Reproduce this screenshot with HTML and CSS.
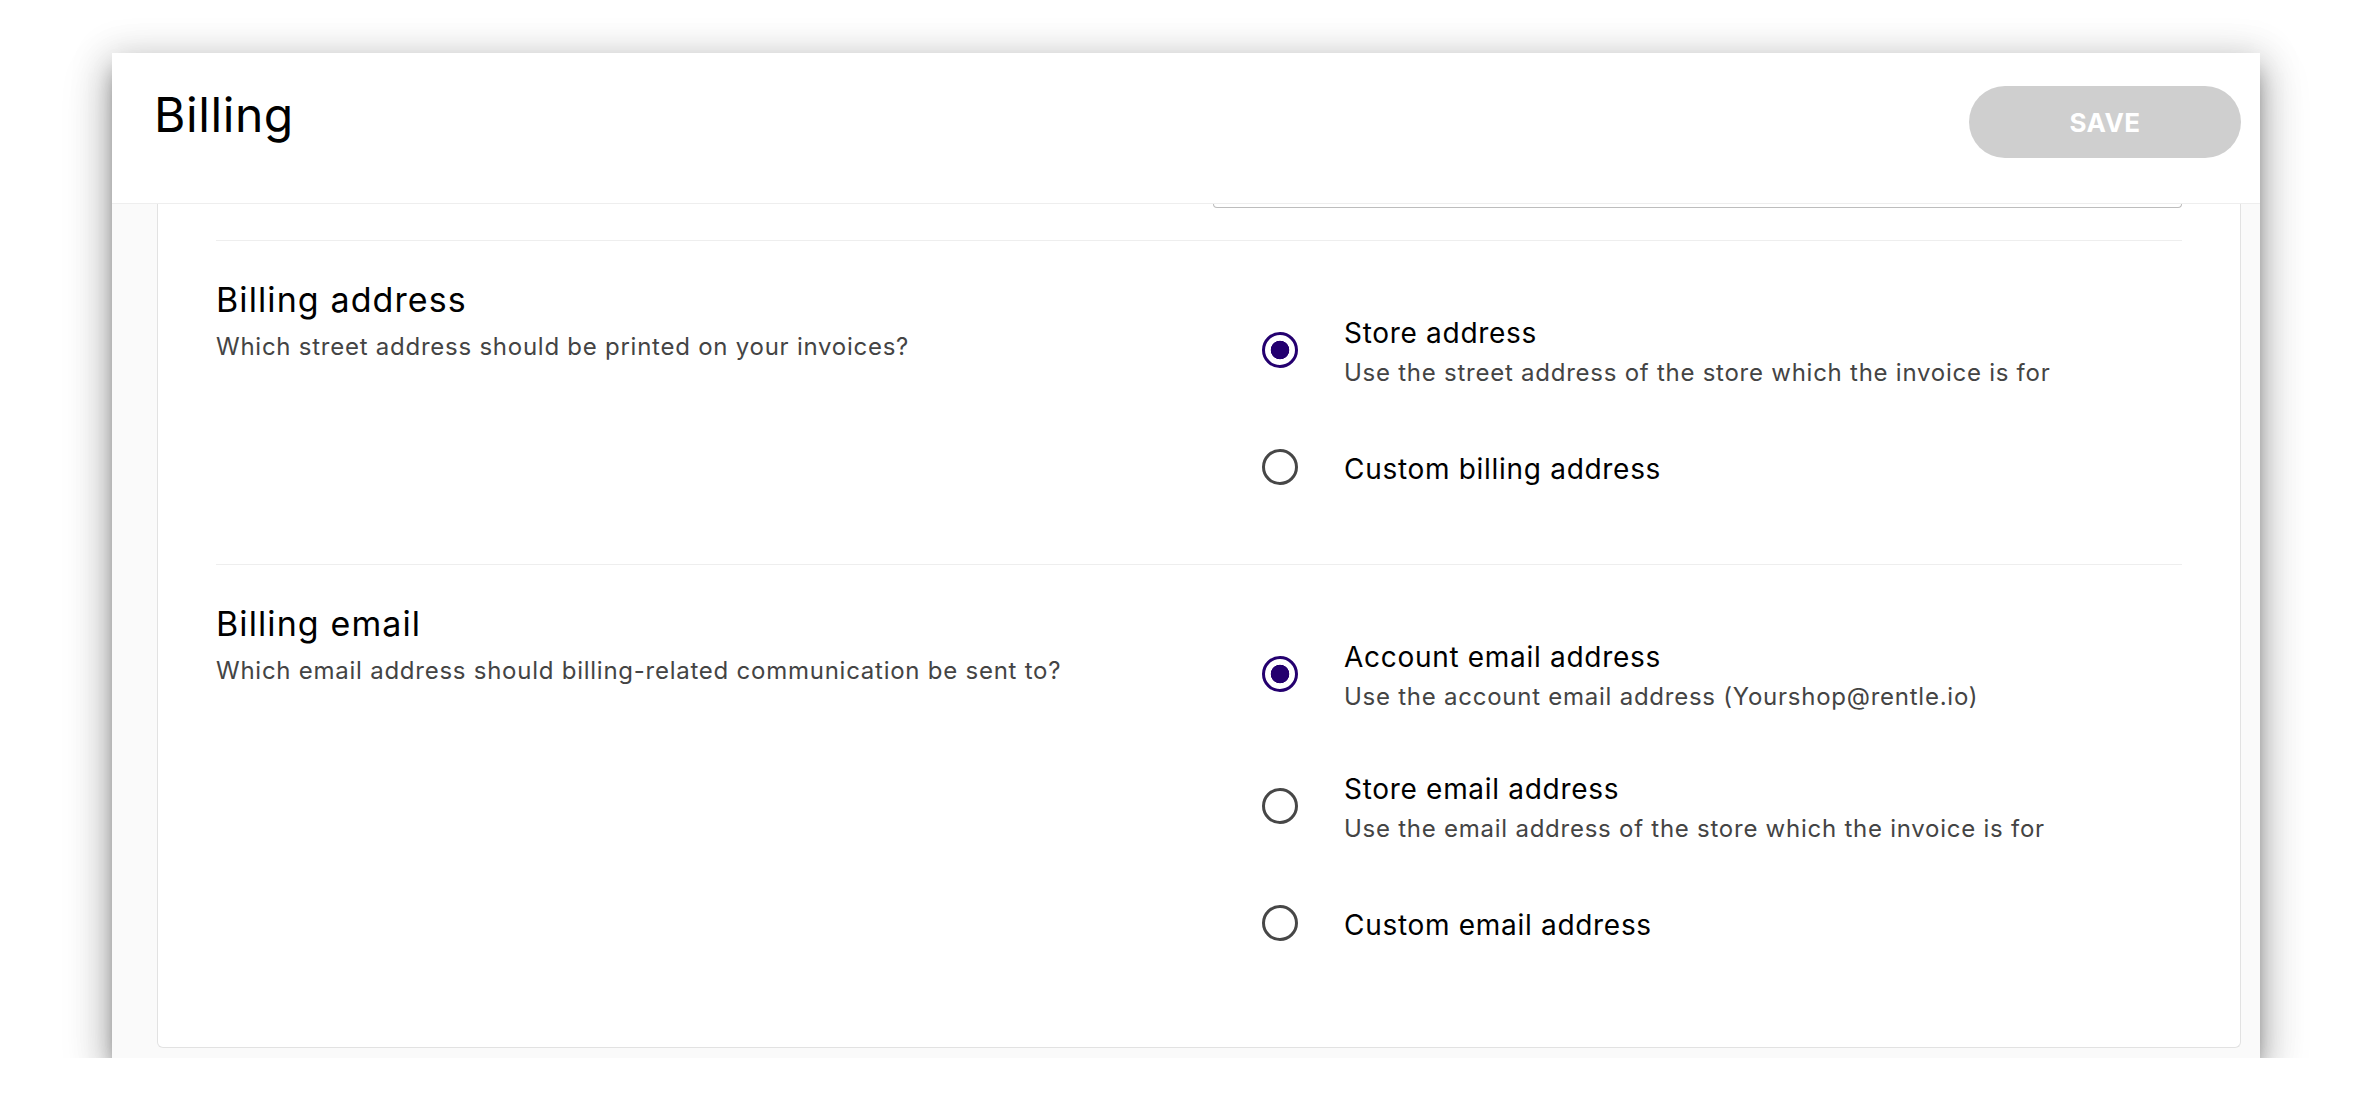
FILE: index.html
```html
<!DOCTYPE html>
<html lang="en">
<head>
    <meta charset="UTF-8">
    <meta name="viewport" content="width=device-width, initial-scale=1.0">
    <title>Billing</title>
    <link rel="stylesheet" href="styles.css">
</head>
<body>
    <div class="dialog">
        <header class="dialog-header">
            <h1>Billing</h1>
            <button type="button" class="save-btn" disabled>SAVE</button>
        </header>

        <div class="dialog-body">
            <div class="card">
                <div class="field-row">
                    <div></div>
                    <div class="field-tail"></div>
                </div>

                <section class="setting">
                    <div class="setting-info">
                        <h2>Billing address</h2>
                        <p>Which street address should be printed on your invoices?</p>
                    </div>
                    <div class="options">
                        <label class="option">
                            <input type="radio" name="address" value="store" checked>
                            <span class="option-text">
                                <span class="option-label">Store address</span>
                                <span class="option-desc">Use the street address of the store which the invoice is for</span>
                            </span>
                        </label>
                        <label class="option">
                            <input type="radio" name="address" value="custom">
                            <span class="option-text">
                                <span class="option-label">Custom billing address</span>
                            </span>
                        </label>
                    </div>
                </section>

                <section class="setting">
                    <div class="setting-info">
                        <h2>Billing email</h2>
                        <p>Which email address should billing-related communication be sent to?</p>
                    </div>
                    <div class="options">
                        <label class="option">
                            <input type="radio" name="email" value="account" checked>
                            <span class="option-text">
                                <span class="option-label">Account email address</span>
                                <span class="option-desc">Use the account email address (Yourshop@rentle.io)</span>
                            </span>
                        </label>
                        <label class="option">
                            <input type="radio" name="email" value="store">
                            <span class="option-text">
                                <span class="option-label">Store email address</span>
                                <span class="option-desc">Use the email address of the store which the invoice is for</span>
                            </span>
                        </label>
                        <label class="option">
                            <input type="radio" name="email" value="custom">
                            <span class="option-text">
                                <span class="option-label">Custom email address</span>
                            </span>
                        </label>
                    </div>
                </section>
            </div>
        </div>
    </div>
</body>
</html>
```

FILE: styles.css
```css
* {
    box-sizing: border-box;
}
body {
    margin: 0;
    padding: 53px 112px 0;
    font-family: 'Inter', 'Noto Sans', sans-serif;
    color: #000;
    background-color: #fff;
}
.dialog {
    background-color: #fafafa;
    box-shadow: 0 14px 20px -6px rgba(0,0,0,0.5), 0 20px 46px 4px rgba(0,0,0,0.16), 0 6px 36px 6px rgba(0,0,0,0.14);
}
.dialog-header {
    display: flex;
    justify-content: space-between;
    align-items: flex-start;
    height: 151px;
    padding: 33px 19px 0 42px;
    background-color: #fff;
    border-bottom: 1px solid #eee;
}
.dialog-header h1 {
    margin: 0;
    font-size: 48px;
    font-weight: 400;
    line-height: 58px;
    letter-spacing: 0.6px;
}
.save-btn {
    width: 272px;
    height: 72px;
    border: none;
    border-radius: 36px;
    background-color: #cfcfcf;
    color: #fff;
    font-family: inherit;
    font-size: 26px;
    font-weight: 700;
    letter-spacing: 0.5px;
}
.dialog-body {
    padding: 0 19px 10px 45px;
}
.card {
    background-color: #fff;
    border: 1px solid #e2e2e2;
    border-top: none;
    border-radius: 0 0 6px 6px;
    padding: 0 58px 27px;
}
.field-row,
.setting {
    display: grid;
    grid-template-columns: 1fr 1fr;
    column-gap: 28px;
}
.field-row {
    margin-bottom: 32px;
}
.field-tail {
    height: 4px;
    border: 1px solid #bdbdbd;
    border-top: none;
    border-radius: 0 0 6px 6px;
}
.setting {
    align-items: start;
    padding: 39px 0 48px;
    border-top: 1px solid #eee;
}
.setting-info h2 {
    margin: 0;
    font-size: 34px;
    font-weight: 400;
    line-height: 40px;
    letter-spacing: 1.1px;
}
.setting-info p {
    margin: 7px 0 0;
    font-size: 24px;
    line-height: 39px;
    letter-spacing: 0.75px;
    color: #444;
}
.options {
    display: flex;
    flex-direction: column;
    gap: 53px;
    padding: 32px 0 23px 49px;
}
.option {
    display: flex;
    align-items: center;
    gap: 46px;
    cursor: pointer;
}
.option input {
    appearance: none;
    flex: none;
    width: 36px;
    height: 36px;
    margin: 5px 0 8px;
    border: 3px solid #474747;
    border-radius: 50%;
    background-color: #fff;
}
.option input:checked {
    border-color: #24006f;
    background: radial-gradient(circle, #24006f 0, #24006f 9px, #fff 9.6px);
}
.option-text {
    display: flex;
    flex-direction: column;
}
.option-label {
    font-size: 28px;
    line-height: 42px;
    letter-spacing: 0.7px;
}
.option-desc {
    font-size: 24px;
    line-height: 37px;
    letter-spacing: 0.75px;
    color: #444;
}
```
